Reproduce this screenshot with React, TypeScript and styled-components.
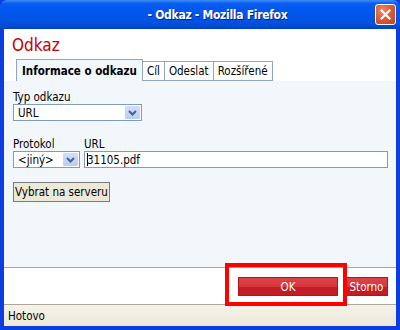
import { styled, createGlobalStyle } from 'styled-components';

const GlobalStyle = createGlobalStyle`
  html, body {
    margin: 0;
    padding: 0;
    background: #ffffff;
  }

  body {
    font-family: 'DejaVu Sans Condensed', 'DejaVu Sans', sans-serif;
    font-size: 11.5px;
    color: #000000;
  }
`;

const tabs = ['Informace o odkazu', 'Cíl', 'Odeslat', 'Rozšířené'];

const Chevron = () => (
  <svg width="9" height="6" viewBox="0 0 9 6">
    <path d="M1 1 L4.5 4.5 L8 1" fill="none" stroke="#4d6185" strokeWidth="2" />
  </svg>
);

const CloseIcon = () => (
  <svg width="11" height="11" viewBox="0 0 11 11">
    <path d="M1.5 1.5 L9.5 9.5 M9.5 1.5 L1.5 9.5" stroke="#ffffff" strokeWidth="2.2" strokeLinecap="square" />
  </svg>
);

const App = () => {
  return (
    <Window>
      <GlobalStyle />
      <TitleBar>
        <Title>- Odkaz - Mozilla Firefox</Title>
        <CloseButton>
          <CloseIcon />
        </CloseButton>
      </TitleBar>
      <Frame>
        <Header>
          <Heading>Odkaz</Heading>
          <TabRow>
            {tabs.map((tab, index) => (
              <Tab key={tab} $active={index === 0}>
                {tab}
              </Tab>
            ))}
          </TabRow>
        </Header>
        <Panel>
          <Field>
            <Label>Typ odkazu</Label>
            <Select $width={129}>
              <SelectText>URL</SelectText>
              <DropButton>
                <Chevron />
              </DropButton>
            </Select>
          </Field>
          <Row>
            <Field>
              <Label>Protokol</Label>
              <Select $width={67}>
                <SelectText>&lt;jiný&gt;</SelectText>
                <DropButton>
                  <Chevron />
                </DropButton>
              </Select>
            </Field>
            <GrowField>
              <Label>URL</Label>
              <TextInput>
                <Caret />
                31105.pdf
              </TextInput>
            </GrowField>
          </Row>
          <BrowseButton>Vybrat na serveru</BrowseButton>
        </Panel>
        <Footer>
          <OkWrap>
            <RedButton $width={100}>OK</RedButton>
            <Highlight />
          </OkWrap>
          <RedButton $width={43}>Storno</RedButton>
        </Footer>
        <StatusBar>Hotovo</StatusBar>
      </Frame>
    </Window>
  );
};

export default App;

const Window = styled.div`
  display: flex;
  flex-direction: column;
  width: 400px;
  height: 330px;
  overflow: hidden;
  background: #0a3ee0;
`;

const TitleBar = styled.div`
  display: flex;
  align-items: center;
  justify-content: space-between;
  height: 29px;
  padding: 0 4px 0 64px;
  box-sizing: border-box;

  border-radius: 7px 7px 0 0;
  background: linear-gradient(
    to bottom,
    #3c8cf8 0%,
    #0a5ef0 12%,
    #0058ee 30%,
    #0055e5 60%,
    #0050dc 85%,
    #0040c0 100%
  );
`;

const Title = styled.div`
  flex: 1;
  text-align: center;
  padding-left: 6px;

  color: #ffffff;
  font-family: 'DejaVu Sans Condensed', 'DejaVu Sans', sans-serif;
  font-size: 12px;
  font-weight: bold;
  letter-spacing: -0.3px;
  text-shadow: 1px 1px 0 #0a1e8c;
`;

const CloseButton = styled.div`
  display: flex;
  align-items: center;
  justify-content: center;
  width: 19px;
  height: 19px;
  margin-left: 10px;

  border: 1px solid #ffffff;
  border-radius: 3px;
  background: radial-gradient(circle at 35% 30%, #f08a66 0%, #e05a35 45%, #c8401e 100%);
`;

const Frame = styled.div`
  display: flex;
  flex-direction: column;
  flex: 1;
  margin: 0 4px 4px 4px;
  background: #ffffff;
`;

const Header = styled.div`
  display: flex;
  flex-direction: column;
  height: 52px;
  background: #ffffff;
`;

const Heading = styled.h1`
  margin: 3px 0 0 8px;
  height: 27px;

  color: #c40000;
  font-family: 'DejaVu Sans Condensed', 'DejaVu Sans', sans-serif;
  font-size: 17px;
  font-weight: normal;
  line-height: 26px;
`;

const TabRow = styled.div`
  display: flex;
  align-items: flex-end;
  margin-left: 12px;
  height: 22px;
`;

const Tab = styled.div<{ $active: boolean }>`
  display: flex;
  align-items: center;
  height: ${(props) => (props.$active ? '22px' : '20px')};
  padding: 0 ${(props) => (props.$active ? '5px' : '4px')};
  box-sizing: border-box;

  border: 1px solid #8fa5c1;
  border-bottom: ${(props) => (props.$active ? 'none' : '1px solid #8fa5c1')};
  margin-left: ${(props) => (props.$active ? '0' : '-1px')};
  background: ${(props) => (props.$active ? '#f2f7fc' : '#ffffff')};

  font-size: 11.5px;
  font-weight: ${(props) => (props.$active ? 'bold' : 'normal')};
  white-space: nowrap;
`;

const Panel = styled.div`
  display: flex;
  flex-direction: column;
  align-items: flex-start;
  height: 187px;
  padding: 9px 8px 0 9px;
  box-sizing: border-box;
  background: #f2f7fc;
  border-bottom: 1px solid #95a6bd;
`;

const Field = styled.div`
  display: flex;
  flex-direction: column;
`;

const GrowField = styled(Field)`
  flex: 1;
`;

const Row = styled.div`
  display: flex;
  align-self: stretch;
  gap: 4px;
  margin-top: 16px;
`;

const Label = styled.label`
  height: 14px;
  line-height: 14px;
  font-size: 11.5px;
`;

const Select = styled.div<{ $width: number }>`
  display: flex;
  align-items: center;
  justify-content: space-between;
  width: ${(props) => props.$width}px;
  height: 17px;
  padding: 1px;
  box-sizing: border-box;

  border: 1px solid #7f9db9;
  background: #ffffff;
`;

const SelectText = styled.span`
  padding-left: 3px;
  font-size: 11.5px;
`;

const DropButton = styled.span`
  display: flex;
  align-items: center;
  justify-content: center;
  width: 15px;
  height: 13px;

  border-radius: 1px;
  background: linear-gradient(to bottom, #d2defc, #b9cdf9);
`;

const TextInput = styled.div`
  display: flex;
  align-items: center;
  height: 17px;
  padding-left: 2px;
  box-sizing: border-box;

  border: 1px solid #7f9db9;
  background: #ffffff;
  font-size: 11.5px;
`;

const Caret = styled.span`
  width: 1px;
  height: 13px;
  margin-right: -1px;
  background: #000000;
`;

const BrowseButton = styled.button`
  height: 20px;
  margin-top: 14px;
  padding: 0 1px;

  border: 1px solid #7a7a7a;
  border-radius: 0;
  background: #ece9d8;
  color: #000000;

  font-family: 'DejaVu Sans Condensed', 'DejaVu Sans', sans-serif;
  font-size: 11.5px;
`;

const Footer = styled.div`
  display: flex;
  justify-content: flex-end;
  align-items: flex-start;
  gap: 7px;
  height: 36px;
  padding: 9px 8px 0 0;
  box-sizing: border-box;
  background: #ffffff;
`;

const OkWrap = styled.div`
  position: relative;
`;

const RedButton = styled.div<{ $width: number }>`
  display: flex;
  align-items: center;
  justify-content: center;
  min-width: ${(props) => props.$width}px;
  height: 19px;
  padding: 0;
  box-sizing: border-box;

  border: 1px solid #b5141c;
  background: linear-gradient(to bottom, #dc4449 0%, #d6363c 50%, #c21d24 51%, #c21d24 100%);
  color: #ffffff;
  font-size: 11.5px;
`;

const Highlight = styled.div`
  position: absolute;
  left: -13px;
  top: -14px;
  width: 122px;
  height: 43px;
  box-sizing: border-box;

  border: 4px solid #ff0000;
  pointer-events: none;
  z-index: 2;
`;

const StatusBar = styled.div`
  display: flex;
  align-items: center;
  flex: 1;
  padding-left: 4px;

  border-top: 1px solid #aca899;
  background: linear-gradient(to bottom, #f4f2ea, #ece9d8);
  font-size: 11.5px;
`;
